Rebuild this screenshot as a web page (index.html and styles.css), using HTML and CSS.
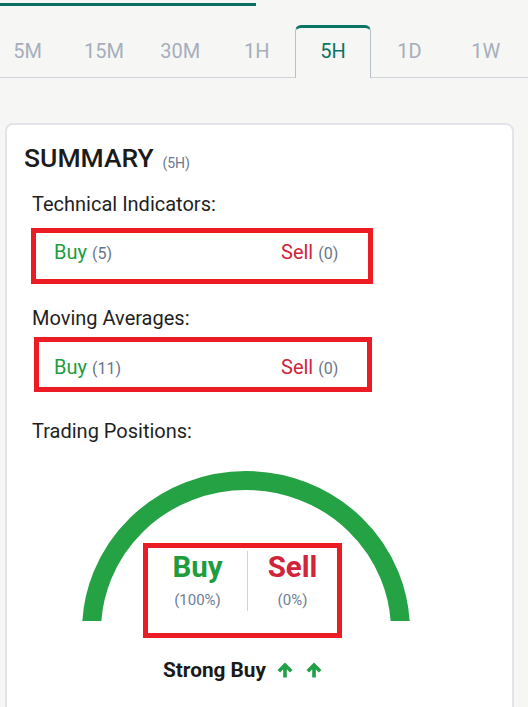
FILE: index.html
```html
<!DOCTYPE html>
<html lang="en">
<head>
<meta charset="utf-8">
<title>Summary</title>
<link rel="stylesheet" href="styles.css">
</head>
<body>
<div class="topbar"></div>
<nav class="tabs">
  <div class="tab">5M</div>
  <div class="tab">15M</div>
  <div class="tab">30M</div>
  <div class="tab">1H</div>
  <div class="tab tab--active">5H</div>
  <div class="tab">1D</div>
  <div class="tab">1W</div>
</nav>
<section class="card">
  <h2 class="card-title">SUMMARY <span class="card-sub">(5H)</span></h2>
  <div class="group">
    <div class="label label--ti">Technical Indicators:</div>
    <div class="score score--ti">
      <span class="buy">Buy <span class="count">(5)</span></span>
      <span class="sell">Sell <span class="count">(0)</span></span>
    </div>
    <div class="label label--ma">Moving Averages:</div>
    <div class="score score--ma">
      <span class="buy">Buy <span class="count">(11)</span></span>
      <span class="sell">Sell <span class="count">(0)</span></span>
    </div>
    <div class="label label--tp">Trading Positions:</div>
    <div class="gauge">
      <svg class="gauge-arc" width="332" height="153" viewBox="0 0 332 153">
        <path d="M 11.5 163 A 154.5 150.5 0 0 1 320.5 163" fill="none" stroke="#25a244" stroke-width="19"/>
      </svg>
      <div class="gauge-box">
        <div class="gauge-col">
          <div class="gauge-word buy">Buy</div>
          <div class="gauge-pct">(100%)</div>
        </div>
        <div class="gauge-divider"></div>
        <div class="gauge-col">
          <div class="gauge-word sell">Sell</div>
          <div class="gauge-pct">(0%)</div>
        </div>
      </div>
    </div>
    <div class="verdict">
      <span>Strong Buy</span>
      <svg class="arrow arrow--first" width="16" height="16" viewBox="0 0 16 16"><path d="M8 15.5V3.2M1.8 9.2L8 3L14.2 9.2" fill="none" stroke="#22a045" stroke-width="3.6"/></svg>
      <svg class="arrow" width="16" height="16" viewBox="0 0 16 16"><path d="M8 15.5V3.2M1.8 9.2L8 3L14.2 9.2" fill="none" stroke="#22a045" stroke-width="3.6"/></svg>
    </div>
  </div>
</section>
</body>
</html>
```
FILE: styles.css
```css
* { box-sizing: border-box; }
html, body {
  margin: 0;
  padding: 0;
  background: #f6f6f4;
  font-family: Roboto, "Liberation Sans", Arial, sans-serif;
  overflow: hidden;
}
.topbar {
  width: 256px;
  height: 3px;
  margin-top: 3px;
  background: #0b6d5e;
}
.tabs {
  display: flex;
  margin-top: 19px;
  margin-left: -10.7px;
  width: calc(100% + 10.7px);
  height: 53px;
  border-bottom: 1px solid #cfd3db;
}
.tab {
  flex: 0 0 76.4px;
  height: 52px;
  border-top: 3px solid transparent;
  border-left: 1px solid transparent;
  border-right: 1px solid transparent;
  border-radius: 6px 6px 0 0;
  padding-top: 11px;
  text-align: center;
  font-size: 20px;
  line-height: 24px;
  color: #a6aebd;
}
.tab--active {
  height: 53px;
  margin-bottom: -1px;
  border-top-color: #0b7563;
  border-left-color: #b9c0cc;
  border-right-color: #b9c0cc;
  background: #f6f6f4;
  color: #0b7563;
}
.card {
  margin: 45px 0 0 5px;
  width: 509px;
  border: 2px solid #e3e4e8;
  border-radius: 8px;
  background: #fff;
  padding: 18px 17px 60px;
}
.card-title {
  margin: 0;
  font-size: 26.5px;
  line-height: 30px;
  font-weight: 500;
  color: #1b1b1b;
}
.card-sub {
  font-size: 14px;
  line-height: 1;
  font-weight: 400;
  color: #6b7890;
  margin-left: 2px;
  position: relative;
  top: 1px;
}
.group {
  margin-left: 8px;
}
.label {
  font-size: 20px;
  line-height: 24px;
  color: #1f1f1f;
}
.label--ti { margin-top: 19px; }
.label--ma { margin-top: 22px; }
.label--tp { margin-top: 27px; }
.score {
  display: grid;
  grid-template-columns: 227px auto;
  border: 5px solid #ec1c24;
  font-size: 20px;
  line-height: 24px;
  height: 56px;
}
.score--ti {
  margin-top: 12px;
  margin-left: -1px;
  width: 342px;
  padding: 7px 0 0 18px;
}
.score--ma {
  margin-top: 7px;
  margin-left: 2px;
  width: 338px;
  height: 55px;
  padding: 13px 0 0 15px;
}
.buy { color: #1e9c3e; }
.sell { color: #d0243a; }
.count {
  font-size: 16px;
  line-height: 1;
  color: #66758d;
}
.gauge {
  position: relative;
  margin-top: 25px;
  margin-left: 48px;
  width: 332px;
  height: 170px;
  padding-top: 75px;
}
.gauge-arc {
  position: absolute;
  top: 0;
  left: 0;
}
.gauge-box {
  position: relative;
  margin-left: 63px;
  width: 199px;
  height: 95px;
  border: 5px solid #ec1c24;
  background: #fff;
  display: grid;
  grid-template-columns: 99px 1px 1fr;
}
.gauge-col {
  text-align: center;
  padding-top: 3px;
}
.gauge-word {
  font-size: 29.5px;
  line-height: 32px;
  font-weight: 700;
}
.gauge-pct {
  margin-top: 8px;
  font-size: 15px;
  line-height: 18px;
  color: #6f7d95;
}
.gauge-divider {
  margin-top: 3px;
  height: 60px;
  background: #cfd4dc;
}
.verdict {
  display: flex;
  align-items: center;
  margin-top: 20px;
  margin-left: 131px;
  font-size: 20.8px;
  line-height: 24px;
  font-weight: 700;
  color: #1a1a1a;
}
.arrow { margin-left: 13px; }
.arrow--first { margin-left: 11px; }
```
